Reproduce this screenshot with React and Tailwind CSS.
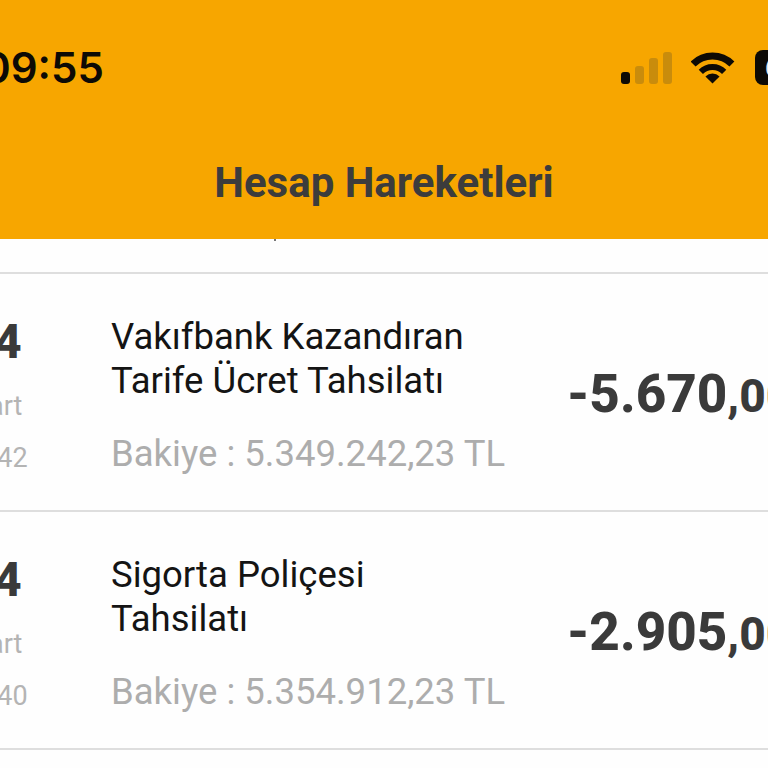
const rows = [
  { day: "14", month: "Mart", time: "12:42", title: ["Vakıfbank Kazandıran", "Tarife Ücret Tahsilatı"], balance: "Bakiye : 5.349.242,23 TL", amount: "-5.670", cents: ",00" },
  { day: "14", month: "Mart", time: "12:40", title: ["Sigorta Poliçesi", "Tahsilatı"], balance: "Bakiye : 5.354.912,23 TL", amount: "-2.905", cents: ",00" },
];

const SignalIcon = () => (
  <svg width="52" height="33" viewBox="0 0 52 33" className="shrink-0">
    <rect x="0" y="21" width="9" height="12" rx="3" fill="#0d0a05" />
    <rect x="14" y="15" width="9" height="18" rx="3" fill="#c98c0c" />
    <rect x="28" y="7" width="9" height="26" rx="3" fill="#c98c0c" />
    <rect x="42" y="1" width="9" height="32" rx="3" fill="#c98c0c" />
  </svg>
);

const WifiIcon = () => (
  <svg width="44" height="33" viewBox="0 0 44 33" className="shrink-0" fill="none">
    <path d="M2.1 13.1A27.5 27.5 0 0 1 40.9 13.1" stroke="#0d0a05" strokeWidth="7" />
    <path d="M9.83 20.83A16.5 16.5 0 0 1 33.17 20.83" stroke="#0d0a05" strokeWidth="6" />
    <path d="M14.43 25.43A10 10 0 0 1 28.57 25.43L21.5 32.5Z" fill="#0d0a05" />
  </svg>
);

const Row = ({ row }) => (
  <div className="flex h-[238px] items-start border-b-2 border-[#dedede]">
    <div className="ml-[-46px] mr-[77px] flex w-[80px] shrink-0 flex-col items-center pt-[38px] text-center">
      <div className="text-[48px] font-extrabold leading-[60px] text-[#3a3a3a]">{row.day}</div>
      <div className="mt-[18px] text-[27px] leading-[32px] text-[#b4b4b4]">{row.month}</div>
      <div className="mt-[20px] text-[27px] leading-[32px] text-[#b4b4b4]">{row.time}</div>
    </div>
    <div className="w-[456px] shrink-0 pt-[41px]">
      <div className="text-[36.5px] leading-[43.5px] text-[#141414]">
        {row.title[0]}
        <br />
        {row.title[1]}
      </div>
      <div className="mt-[30px] whitespace-nowrap text-[36.5px] leading-[44px] text-[#adadad]">{row.balance}</div>
    </div>
    <div className="whitespace-nowrap pt-[90px] text-[53px] font-extrabold leading-[60px] text-[#3a3a3a]">
      {row.amount}
      <span className="text-[46px]">{row.cents}</span>
    </div>
  </div>
);

const App = () => {
  return (
    <div className="h-[768px] w-[768px] overflow-hidden bg-[#fefefe] font-['Roboto',sans-serif]">
      <header className="flex h-[239px] flex-col bg-[#f7a600]">
        <div className="flex h-[137px] items-center justify-between pb-[2px]">
          <span className="ml-[-17px] font-['Inter',sans-serif] text-[42px] font-semibold leading-none text-[#0d0a05]">09:55</span>
          <div className="mr-[-21px] flex items-center gap-[18px]">
            <SignalIcon />
            <WifiIcon />
            <div className="ml-[2px] flex h-[35px] w-[34px] items-center rounded-[8px] bg-[#0d0a05] pl-[10px] text-[28px] font-bold leading-none text-[#e8e8e8]">6</div>
          </div>
        </div>
        <h1 className="mt-[22px] text-center text-[42px] font-bold leading-[48px] text-[#3c3c3c]">Hesap Hareketleri</h1>
      </header>
      <div className="h-[35px] border-b-2 border-[#dedede]">
        <div className="ml-[274px] h-[2px] w-[2px] bg-[#777]" />
      </div>
      {rows.map((row) => (
        <Row key={row.balance} row={row} />
      ))}
    </div>
  );
};

export default App;
